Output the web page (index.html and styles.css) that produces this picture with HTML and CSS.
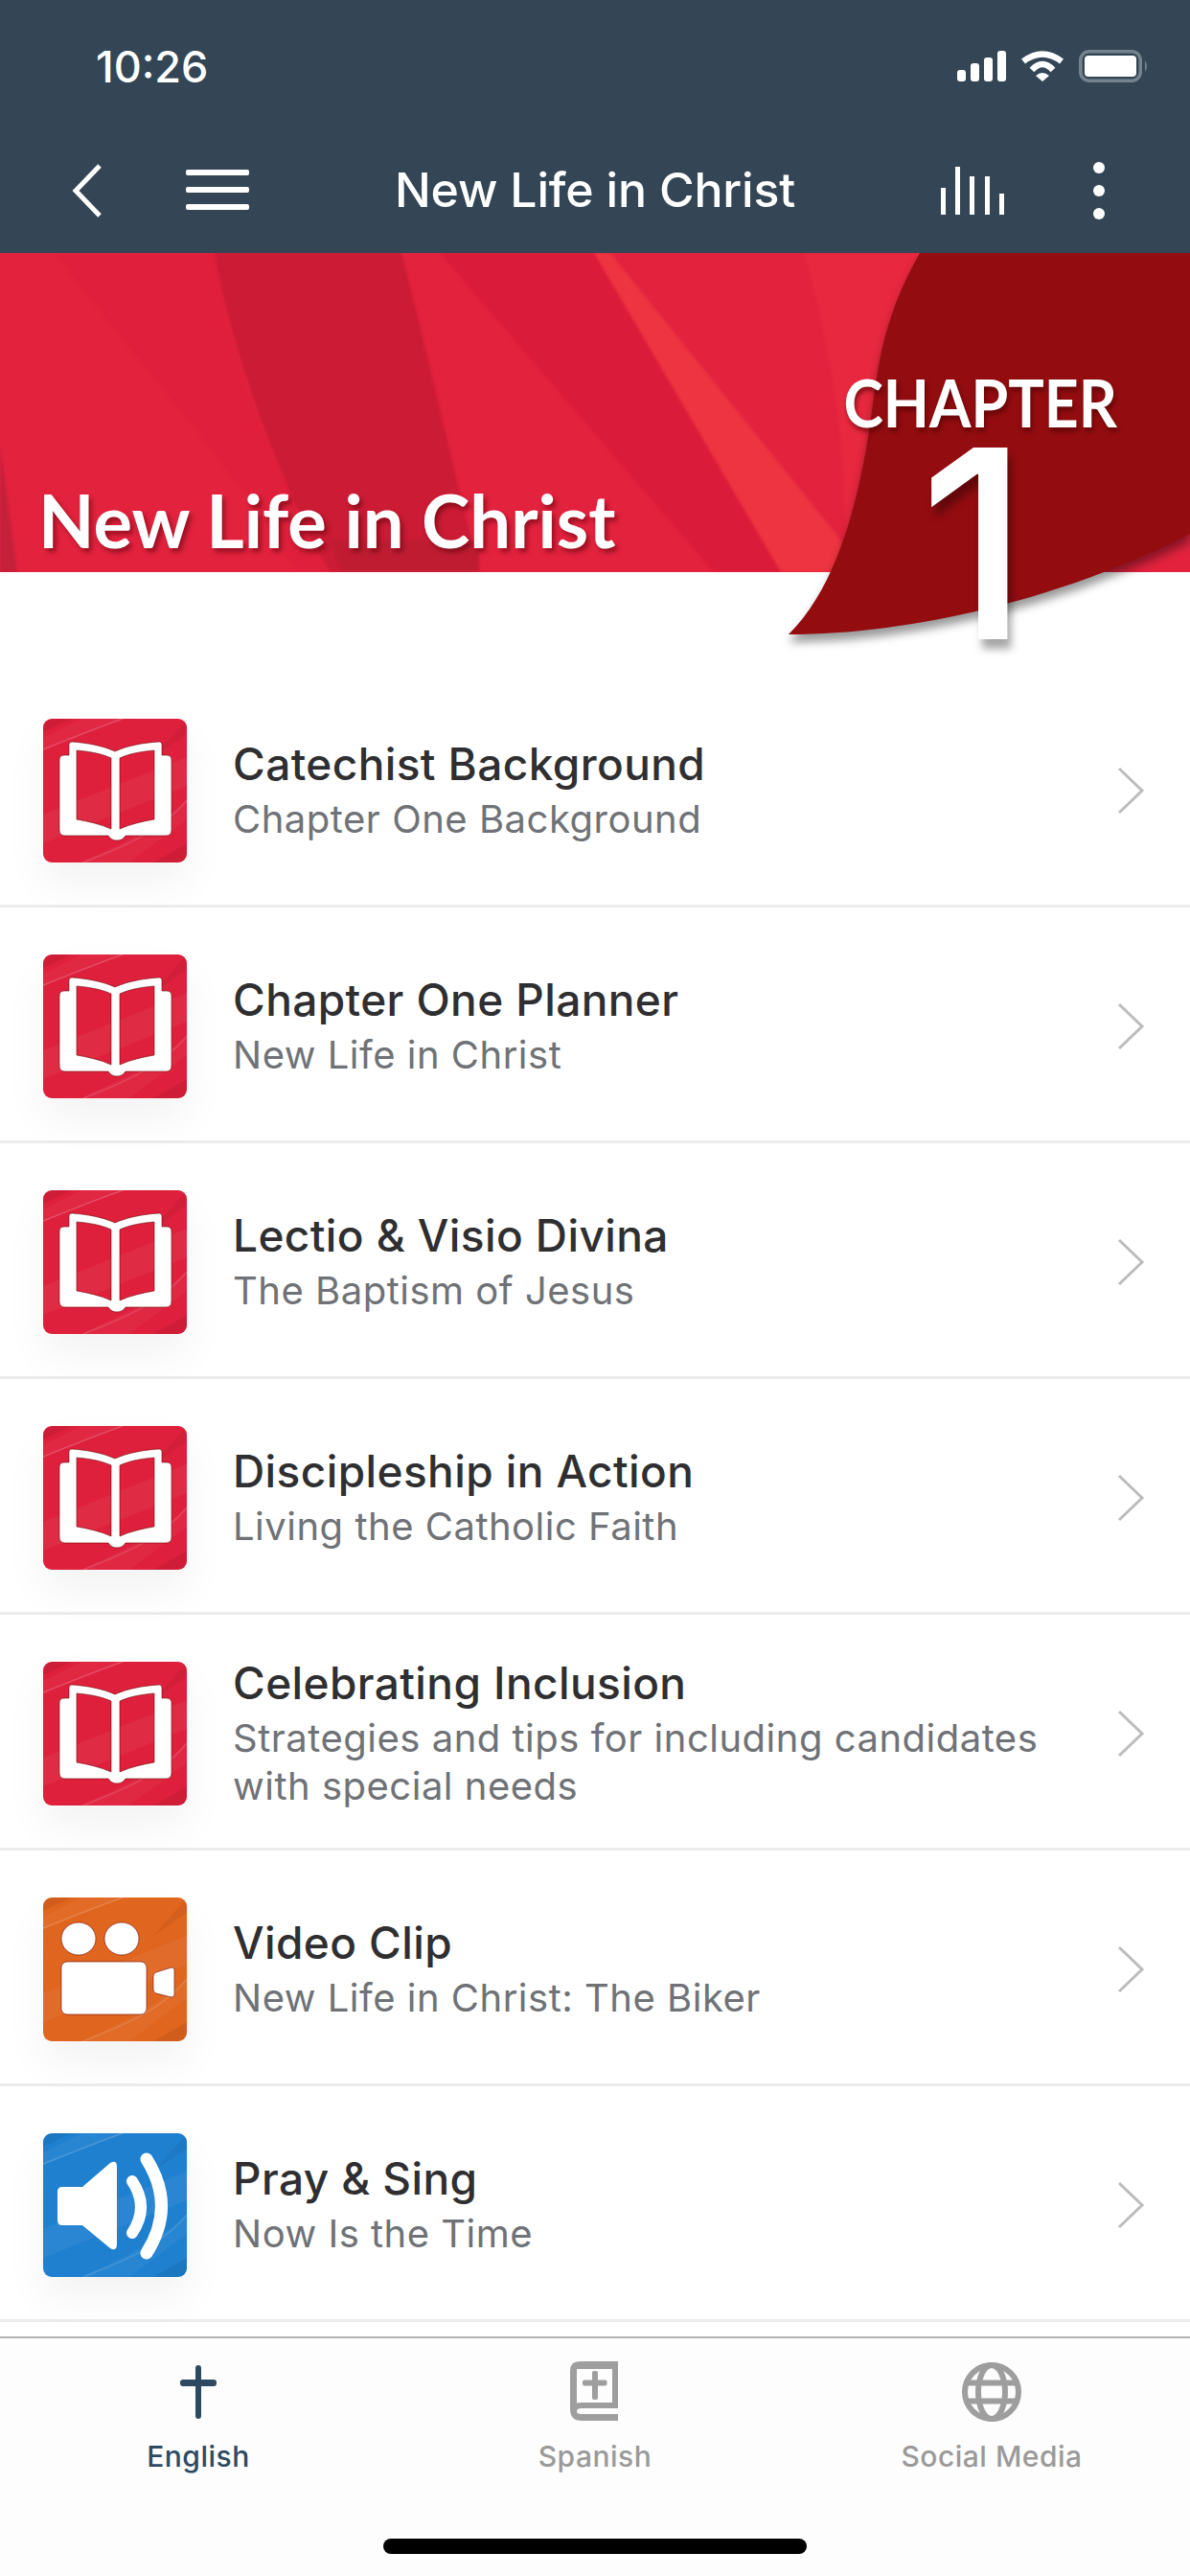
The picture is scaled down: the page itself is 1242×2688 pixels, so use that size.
FILE: index.html
```html
<!DOCTYPE html>
<html lang="en">
<head>
    <meta charset="UTF-8">
    <meta name="viewport" content="width=device-width, initial-scale=1.0">
    <title>New Life in Christ</title>
    <link rel="stylesheet" href="styles.css">
</head>
<body>
    <svg class="defs" width="0" height="0">
        <symbol id="tex" viewBox="0 0 150 150">
            <path d="M0 0H30L0 14Z" fill="#000" opacity=".07"/>
            <path d="M0 33C25 22 55 10 85 0L40 0 0 20Z" fill="#fff" opacity=".04"/>
            <path d="M0 32C25 22 55 10 83 0" stroke="#fff" stroke-width="1.5" opacity=".18" fill="none"/>
            <path d="M0 100L150 40V70L0 130Z" fill="#fff" opacity=".05"/>
            <path d="M40 150C70 135 110 120 150 85V105L90 150Z" fill="#fff" opacity=".04"/>
            <path d="M42 150C70 138 120 122 150 85" stroke="#fff" stroke-width="1.5" opacity=".14" fill="none"/>
            <path d="M150 0V16L115 40 150 0Z" fill="#000" opacity=".05"/>
            <path d="M150 150H115L150 130Z" fill="#000" opacity=".07"/>
        </symbol>
        <symbol id="book" viewBox="0 0 150 150">
            <use href="#tex"/>
            <path class="glyph" fill-rule="evenodd" d="M30 24C45 25 62 28 75 34C88 28 105 25 121 24Q124 24 124 27V38H129Q134 38 134 43V116Q134 122 128 122H86Q83 127 77 127Q71 127 68 122H23Q17 122 17 116V43Q17 38 22 38H27V27Q27 24 30 24ZM35 33V105C47 107 60 110 71 115V41C60 36 47 34 35 33ZM116 33C104 34 91 36 80 41V115C91 110 104 107 116 105Z"/>
        </symbol>
        <symbol id="video" viewBox="0 0 150 150">
            <use href="#tex"/>
            <g class="glyph">
                <ellipse cx="37" cy="43" rx="18" ry="17"/>
                <ellipse cx="82" cy="43" rx="18" ry="17"/>
                <rect x="19" y="67" width="89" height="55" rx="6"/>
                <path d="M115 82Q115 79 118 78L134 73Q137 73 137 76V101Q137 104 134 104L118 100Q115 99 115 96Z"/>
            </g>
        </symbol>
        <symbol id="speaker" viewBox="0 0 150 150">
            <use href="#tex"/>
            <path d="M20 56H41L70 31Q77 27 77 35V115Q77 124 70 120L41 96H20Q15 96 15 91V61Q15 56 20 56Z" fill="#fff"/>
            <path d="M93 50Q111 77 93 104" fill="none" stroke="#fff" stroke-width="12" stroke-linecap="round"/>
            <path d="M108 27Q139 76 108 125" fill="none" stroke="#fff" stroke-width="13" stroke-linecap="round"/>
        </symbol>
        <symbol id="chevron" viewBox="0 0 30 50">
            <path d="M3 2L27 25L3 48" fill="none" stroke="#bcbcbc" stroke-width="3"/>
        </symbol>
    </svg>

    <header class="topbar">
        <div class="status">
            <span class="time">10:26</span>
            <div class="status-icons">
                <svg width="51" height="32" viewBox="0 0 51 32" fill="#fff">
                    <rect x="0" y="20" width="9" height="12" rx="3"/>
                    <rect x="14" y="13" width="9" height="19" rx="3"/>
                    <rect x="28" y="7" width="9" height="25" rx="3"/>
                    <rect x="42" y="0" width="9" height="32" rx="3"/>
                </svg>
                <svg width="46" height="32" viewBox="0 0 46 32">
                    <path d="M3 11Q23 -4 43 11M12 20Q23 8 34 20" fill="none" stroke="#fff" stroke-width="6.5"/>
                    <path d="M16 26Q23 20 30 26L23 32Z" fill="#fff"/>
                </svg>
                <svg width="73" height="34" viewBox="0 0 73 34">
                    <rect x="1.75" y="1.75" width="62.5" height="30.5" rx="9" fill="none" stroke="#75838f" stroke-width="3.5"/>
                    <rect x="6" y="6" width="54" height="22" rx="4" fill="#fff"/>
                    <path d="M69 11Q73 17 69 23Z" fill="#75838f"/>
                </svg>
            </div>
        </div>
        <nav class="navbar">
            <div class="nav-left">
                <svg width="32" height="56" viewBox="0 0 32 56" fill="none" stroke="#fff" stroke-width="5">
                    <path d="M29 2L4 28L29 54"/>
                </svg>
                <svg width="66" height="44" viewBox="0 0 66 44" fill="#fff">
                    <rect y="0" width="66" height="6" rx="2"/>
                    <rect y="18" width="66" height="6" rx="2"/>
                    <rect y="36" width="66" height="6" rx="2"/>
                </svg>
            </div>
            <h1 class="nav-title">New Life in Christ</h1>
            <div class="nav-right">
                <svg width="66" height="50" viewBox="0 0 66 50" fill="#fff">
                    <rect x="0" y="22" width="5" height="28"/>
                    <rect x="15" y="0" width="5" height="50"/>
                    <rect x="30" y="10" width="5" height="40"/>
                    <rect x="46" y="10" width="5" height="40"/>
                    <rect x="61" y="28" width="5" height="22"/>
                </svg>
                <svg width="14" height="60" viewBox="0 0 14 60" fill="#fff">
                    <circle cx="7" cy="6" r="6"/>
                    <circle cx="7" cy="30" r="6"/>
                    <circle cx="7" cy="54" r="6"/>
                </svg>
            </div>
        </nav>
    </header>

    <section class="banner">
        <svg class="banner-bg" width="1242" height="333" viewBox="0 0 1242 333">
            <rect width="1242" height="333" fill="#e3223e"/>
            <g class="banner-folds">
                <path d="M57 0H224C235 80 260 180 345 333H310C250 230 150 120 57 0Z" fill="#df1f3b"/>
                <path d="M224 0H419C440 80 470 210 500 333H345C300 260 240 100 224 0Z" fill="#cb1b35"/>
                <path d="M345 300H500V333H356Z" fill="#bf1c32"/>
                <path d="M0 200L18 333H0Z" fill="#c4203a"/>
                <path d="M459 0H620L815 333H745Z" fill="#db1b3a"/>
                <path d="M620 0H637L878 300V333H815Z" fill="#ed3440"/>
                <path d="M840 0H960V333H880C890 200 860 80 840 0Z" fill="#e8283f"/>
            </g>
        </svg>
        <h2 class="banner-title">New Life in Christ</h2>
        <div class="ribbon">
            <svg class="ribbon-shape" width="440" height="420" viewBox="0 0 440 420">
                <path d="M158 0C130 50 118 90 110 150C100 230 80 340 21 398C140 398 300 365 440 293V0Z" fill="#930c10"/>
            </svg>
            <div class="chapter">
                <span class="chapter-label">CHAPTER</span>
                <span class="chapter-num">1</span>
            </div>
        </div>
    </section>

    <main class="list">
        <a class="row">
            <svg class="tile tile-red"><use href="#book"/></svg>
            <div class="row-text">
                <h3>Catechist Background</h3>
                <p>Chapter One Background</p>
            </div>
            <svg class="chev"><use href="#chevron"/></svg>
        </a>
        <a class="row">
            <svg class="tile tile-red"><use href="#book"/></svg>
            <div class="row-text">
                <h3>Chapter One Planner</h3>
                <p>New Life in Christ</p>
            </div>
            <svg class="chev"><use href="#chevron"/></svg>
        </a>
        <a class="row">
            <svg class="tile tile-red"><use href="#book"/></svg>
            <div class="row-text">
                <h3>Lectio &amp; Visio Divina</h3>
                <p>The Baptism of Jesus</p>
            </div>
            <svg class="chev"><use href="#chevron"/></svg>
        </a>
        <a class="row">
            <svg class="tile tile-red"><use href="#book"/></svg>
            <div class="row-text">
                <h3>Discipleship in Action</h3>
                <p>Living the Catholic Faith</p>
            </div>
            <svg class="chev"><use href="#chevron"/></svg>
        </a>
        <a class="row">
            <svg class="tile tile-red"><use href="#book"/></svg>
            <div class="row-text">
                <h3>Celebrating Inclusion</h3>
                <p>Strategies and tips for including candidates with special needs</p>
            </div>
            <svg class="chev"><use href="#chevron"/></svg>
        </a>
        <a class="row">
            <svg class="tile tile-orange"><use href="#video"/></svg>
            <div class="row-text">
                <h3>Video Clip</h3>
                <p>New Life in Christ: The Biker</p>
            </div>
            <svg class="chev"><use href="#chevron"/></svg>
        </a>
        <a class="row">
            <svg class="tile tile-blue"><use href="#speaker"/></svg>
            <div class="row-text">
                <h3>Pray &amp; Sing</h3>
                <p>Now Is the Time</p>
            </div>
            <svg class="chev"><use href="#chevron"/></svg>
        </a>
    </main>

    <footer class="tabbar">
        <div class="tabs">
            <a class="tab tab-active">
                <svg width="64" height="64" viewBox="0 0 64 64" fill="#2e4a62">
                    <rect x="29" y="4" width="6" height="56" rx="3"/>
                    <rect x="13" y="19" width="38" height="7" rx="3"/>
                </svg>
                <span>English</span>
            </a>
            <a class="tab">
                <svg width="64" height="64" viewBox="0 0 64 64" fill="#9e9e9e">
                    <path fill-rule="evenodd" d="M16 0H56V49H18Q13 49 13 52Q13 55 18 55H56V62H18Q6 62 6 50V10Q6 0 16 0ZM13 8V43.5Q15 43 18 43H50V8Z"/>
                    <rect x="29" y="10" width="6" height="30" rx="2"/>
                    <rect x="19" y="19.5" width="25.5" height="6" rx="2"/>
                </svg>
                <span>Spanish</span>
            </a>
            <a class="tab">
                <svg width="64" height="64" viewBox="0 0 64 64" fill="none" stroke="#9e9e9e" stroke-width="6">
                    <circle cx="32" cy="32" r="28"/>
                    <ellipse cx="32" cy="32" rx="14" ry="28"/>
                    <path d="M5 22.6H59M5 41.4H59"/>
                </svg>
                <span>Social Media</span>
            </a>
        </div>
        <div class="home-bar"></div>
    </footer>
</body>
</html>
```

FILE: styles.css
```css
* {
    box-sizing: border-box;
}

html,
body {
    margin: 0;
    padding: 0;
}

body {
    width: 1242px;
    height: 2688px;
    overflow: hidden;
    display: flex;
    flex-direction: column;
    background-color: #fff;
    font-family: Inter, "Liberation Sans", sans-serif;
}

.defs {
    position: absolute;
}

.topbar {
    height: 264px;
    background-color: #344656;
    color: #fff;
    flex: none;
}

.status {
    display: flex;
    justify-content: space-between;
    align-items: center;
    height: 138px;
    padding: 0 43px 0 100px;
}

.time {
    font-size: 45px;
    font-weight: 500;
}

.status-icons {
    display: flex;
    align-items: center;
    gap: 15px;
}

.navbar {
    display: grid;
    grid-template-columns: 1fr auto 1fr;
    align-items: center;
    height: 122px;
}

.nav-left {
    display: flex;
    align-items: center;
    gap: 87px;
    padding-left: 75px;
}

.nav-title {
    margin: 0 0 2px;
    font-size: 50px;
    font-weight: 500;
    letter-spacing: -0.2px;
}

.nav-right {
    display: flex;
    align-items: center;
    justify-content: flex-end;
    gap: 92px;
    padding-right: 88px;
}

.banner {
    position: relative;
    flex: none;
    height: 333px;
    display: flex;
    align-items: flex-end;
    padding: 0 0 9px 40px;
}

.banner-bg {
    position: absolute;
    left: 0;
    top: 0;
}

.banner-folds {
    filter: blur(1.5px);
}

.banner-title {
    position: relative;
    margin: 0;
    color: #fff;
    font-family: Lato, sans-serif;
    font-size: 76px;
    font-weight: 700;
    line-height: 1.2;
    text-shadow: 3px 4px 5px rgba(90, 0, 10, 0.55);
}

.ribbon {
    position: absolute;
    right: 0;
    top: 0;
    width: 440px;
    height: 420px;
}

.ribbon-shape {
    position: absolute;
    left: 0;
    top: 0;
    overflow: visible;
    filter: drop-shadow(0 8px 5px rgba(0, 0, 0, 0.4));
}

.chapter {
    position: absolute;
    left: 80px;
    top: 122px;
    width: 283px;
    display: flex;
    flex-direction: column;
    align-items: center;
    gap: 13px;
    color: #fff;
}

.chapter-label {
    font-family: Lato, sans-serif;
    font-size: 68px;
    font-weight: 700;
    line-height: 1;
    white-space: nowrap;
    transform: scaleX(0.92);
    text-shadow: 2px 4px 6px rgba(70, 0, 0, 0.6);
}

.chapter-num {
    margin-right: 14px;
    font-family: Inter, sans-serif;
    font-size: 275px;
    font-weight: 500;
    line-height: 200px;
    text-shadow: 4px 10px 8px rgba(0, 0, 0, 0.35);
}

.list {
    flex: 1;
    min-height: 0;
    overflow: hidden;
    padding-top: 104px;
}

.row {
    display: flex;
    align-items: center;
    height: 246px;
    padding: 4px 47px 0 45px;
    border-bottom: 3px solid #ececee;
}

.tile {
    flex: none;
    width: 150px;
    height: 150px;
    border-radius: 9px;
    box-shadow: 0 22px 45px rgba(0, 0, 0, 0.05);
}

.tile-red {
    background-color: #df203c;
}

.tile-orange {
    background-color: #e0651f;
}

.tile-blue {
    background-color: #1f80d0;
}

.glyph {
    fill: #fff;
    stroke: rgba(110, 10, 10, 0.6);
    stroke-width: 1;
}

.row-text {
    flex: 1;
    padding: 0 30px 3px 48px;
}

.row-text h3 {
    margin: 0 0 3px;
    color: #2f2f31;
    font-size: 46px;
    font-weight: 500;
    line-height: 60px;
    letter-spacing: 0.4px;
}

.row-text p {
    margin: 0;
    color: #6f7276;
    font-size: 40px;
    line-height: 50px;
    letter-spacing: 0.5px;
}

.chev {
    flex: none;
    width: 30px;
    height: 50px;
}

.tabbar {
    flex: none;
    height: 250px;
    background-color: #fdfdfd;
    border-top: 2px solid #b2b2b2;
    display: flex;
    flex-direction: column;
}

.tabs {
    display: grid;
    grid-template-columns: repeat(3, 1fr);
    padding-top: 24px;
}

.tab {
    display: flex;
    flex-direction: column;
    align-items: center;
    gap: 17px;
    color: #9a9a9a;
    font-size: 30px;
    font-weight: 500;
    letter-spacing: 0.5px;
}

.tab-active {
    color: #2e4a62;
}

.home-bar {
    width: 442px;
    height: 16px;
    margin: 68px auto 0;
    border-radius: 8px;
    background-color: #000;
}
```
